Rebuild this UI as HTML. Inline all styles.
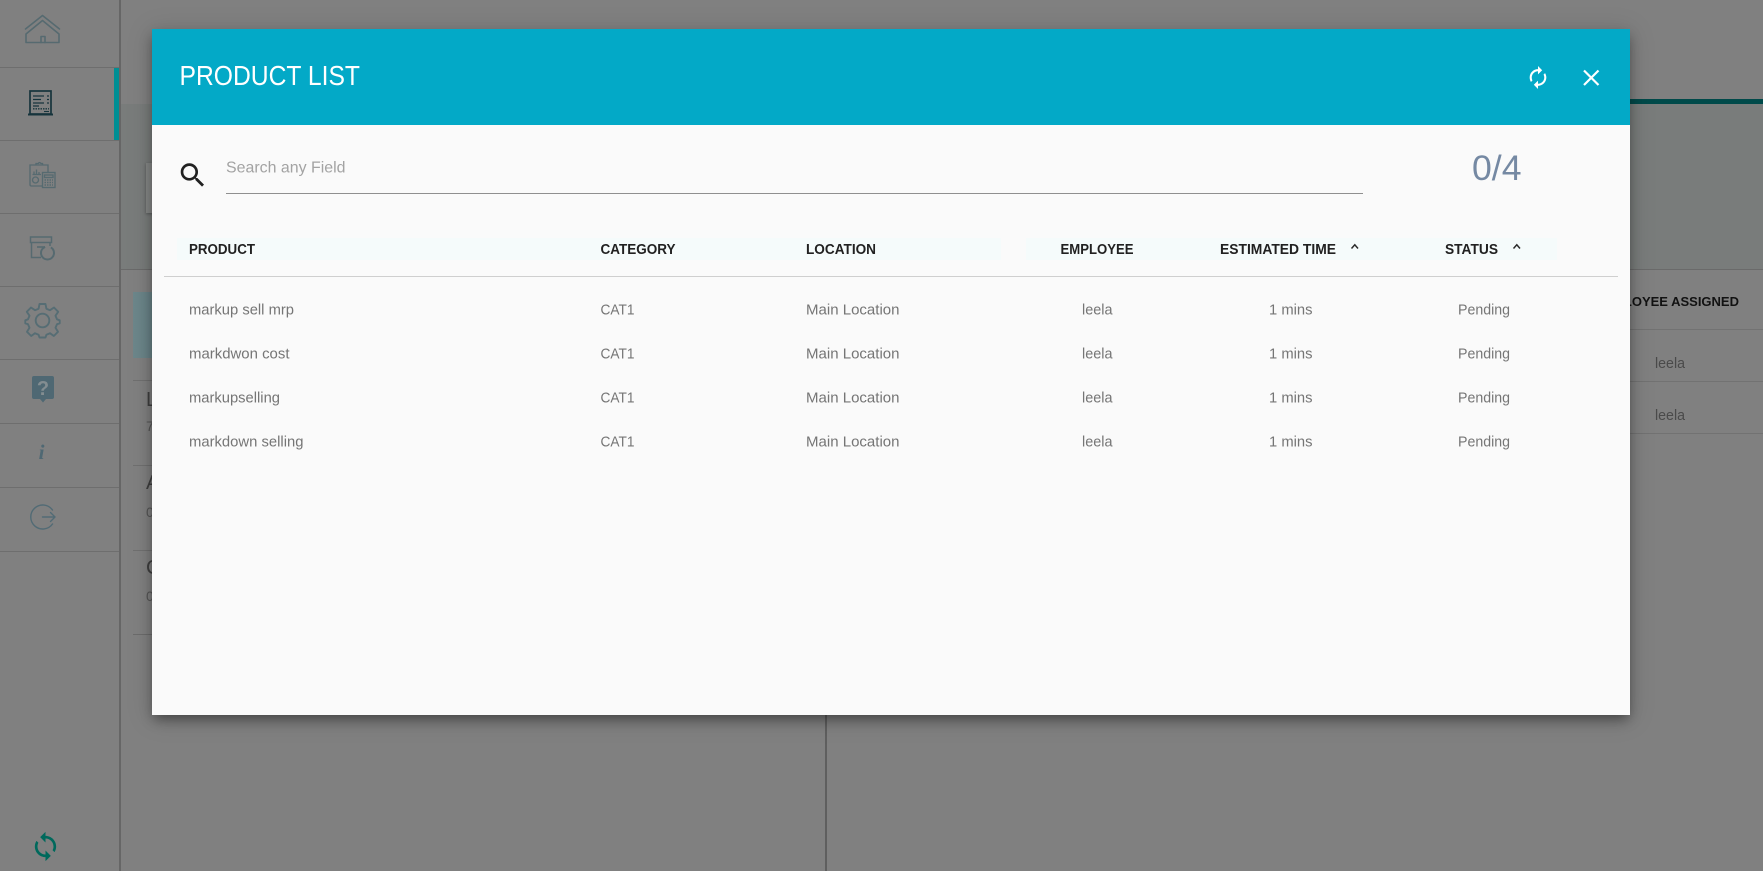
<!DOCTYPE html>
<html lang="en">
<head>
<meta charset="utf-8">
<title>Product List</title>
<style>
html,body{margin:0;padding:0;width:1763px;height:871px;overflow:hidden;background:#808080;font-family:"Liberation Sans",Arial,sans-serif}
.a{position:absolute}
#modal{left:152px;top:29px;width:1478px;height:686px;background:#fafafa;box-shadow:0 6px 12px -2px rgba(0,0,0,.42),0 3px 24px 2px rgba(0,0,0,.13)}
svg{position:absolute;left:0;top:0}
</style>
</head>
<body>
<!-- background regions -->
<div class="a" style="left:121px;top:104px;width:1642px;height:165px;background:#797c7b"></div>
<div class="a" style="left:1500px;top:99px;width:263px;height:5px;background:#004a4a"></div>
<div class="a" style="left:146px;top:163px;width:30px;height:50px;background:#858786;box-shadow:0 1px 3px rgba(0,0,0,.3)"></div>
<div class="a" style="left:121px;top:269px;width:1642px;height:1px;background:#6a6a6a"></div>
<div class="a" style="left:119px;top:0;width:2px;height:871px;background:#666"></div>
<div class="a" style="left:825px;top:270px;width:2px;height:601px;background:#5f5f5f"></div>
<div class="a" style="left:133px;top:292px;width:60px;height:66px;background:linear-gradient(90deg,#6d878b,#607a7f)"></div>
<div class="a" style="left:133px;top:380px;width:692px;height:1px;background:#707070"></div>
<div class="a" style="left:133px;top:465px;width:692px;height:1px;background:#707070"></div>
<div class="a" style="left:133px;top:550px;width:692px;height:1px;background:#707070"></div>
<div class="a" style="left:133px;top:634px;width:692px;height:1px;background:#6c6c6c"></div>
<div class="a" style="left:1500px;top:329px;width:263px;height:1px;background:#727272"></div>
<div class="a" style="left:1500px;top:381px;width:263px;height:1px;background:#727272"></div>
<div class="a" style="left:1500px;top:433px;width:263px;height:1px;background:#727272"></div>
<!-- sidebar dividers -->
<div class="a" style="left:0;top:67px;width:119px;height:1px;background:#6e6e6e"></div>
<div class="a" style="left:0;top:140px;width:119px;height:1px;background:#6e6e6e"></div>
<div class="a" style="left:0;top:213px;width:119px;height:1px;background:#6e6e6e"></div>
<div class="a" style="left:0;top:286px;width:119px;height:1px;background:#6e6e6e"></div>
<div class="a" style="left:0;top:359px;width:119px;height:1px;background:#6e6e6e"></div>
<div class="a" style="left:0;top:423px;width:119px;height:1px;background:#6e6e6e"></div>
<div class="a" style="left:0;top:487px;width:119px;height:1px;background:#6e6e6e"></div>
<div class="a" style="left:0;top:551px;width:119px;height:1px;background:#6e6e6e"></div>
<div class="a" style="left:114px;top:68px;width:5px;height:72px;background:#008f94"></div>

<!-- background text and sidebar icons -->
<svg width="1763" height="871" viewBox="0 0 1763 871" font-family="'Liberation Sans',Arial,sans-serif">
  <text x="146" y="406" font-size="20" fill="#3f3f3f">L</text>
  <text x="146" y="431" font-size="14" fill="#555">7</text>
  <text x="146" y="489" font-size="20" fill="#3f3f3f">A</text>
  <text x="146" y="517" font-size="14" fill="#555">0</text>
  <text x="146" y="574" font-size="20" fill="#3f3f3f">C</text>
  <text x="146" y="601" font-size="14" fill="#555">0</text>
  <text x="1739" y="306" font-size="13" font-weight="700" fill="#121212" text-anchor="end">EMPLOYEE ASSIGNED</text>
  <text x="1655" y="368" font-size="14.5" fill="#4a4a4a" textLength="30" lengthAdjust="spacingAndGlyphs">leela</text>
  <text x="1655" y="420" font-size="14.5" fill="#4a4a4a" textLength="30" lengthAdjust="spacingAndGlyphs">leela</text>

  <!-- home -->
  <g fill="none" stroke="#566a70" stroke-width="1.6" stroke-linejoin="round" stroke-linecap="round">
    <path d="M25.5 29 42.5 15.5 59.5 29"/>
    <path d="M26 42.5V34L42.5 20.5 59 34V42.5Z"/>
    <path d="M41 42.5V36.5H45V42.5"/>
  </g>
  <!-- receipt (active) -->
  <g fill="none" stroke="#16343c">
    <rect x="30" y="91" width="21" height="23" stroke-width="1.7"/>
    <path d="M28 114.5H53" stroke-width="2"/>
    <path d="M33 96H44M47 96H49M33 99.5H41M47 99.5H49M33 103H44M47 103H49M33 106H39" stroke-width="1.3"/>
    <path d="M33 108.8H49" stroke-width="1.3" stroke-dasharray="1.5 1"/>
    <path d="M44 111.5H49" stroke-width="1.1"/>
  </g>
  <!-- report -->
  <g fill="none" stroke="#566a70" stroke-width="1.35">
    <path d="M42 186H31.5Q30 186 30 184.5V165H48V172"/>
    <path d="M36 165V163.5H38.5Q39 161.5 41 163.5H42.5V165"/>
    <rect x="42.5" y="172.5" width="12.5" height="15"/>
    <rect x="44.5" y="175" width="8.5" height="2.5"/>
    <path d="M44.5 180H53M44.5 182.5H53M44.5 185H53" stroke-dasharray="1.5 1" stroke-width="1.4"/>
    <circle cx="35.5" cy="180" r="3"/>
    <path d="M34 174V171.5M36.5 174V169.5M39 174V172M32.5 174.5H41"/>
  </g>
  <!-- box -->
  <g fill="none" stroke="#566a70" stroke-width="1.5">
    <rect x="30.5" y="237" width="21" height="5.5"/>
    <path d="M31.5 242.5V257.5H41M50 242.5V246"/>
    <path d="M37 247H45" stroke-width="1.6"/>
    <circle cx="47.5" cy="253" r="6.5" stroke-width="2" stroke-dasharray="28 6"/>
  </g>
  <!-- gear -->
  <g fill="none" stroke="#566d74" stroke-width="1.9" stroke-linejoin="round">
    <circle cx="42.5" cy="320.5" r="6.8"/>
    <path d="M39.5 304H45.5L46.4 308.7 50 310.2 54 307.5 58.2 311.8 55.5 315.7 57 319.3 59.7 320.3V323.3L57 324.2 55.5 327.8 58 331.8 53.8 336 50 333.2 46.4 334.8 45.5 337.5H39.5L38.6 334.8 35 333.2 31.2 336 27 331.8 29.5 327.8 28 324.2 25.3 323.3V320.3L28 319.3 29.5 315.7 26.8 311.8 31 307.5 35 310.2 38.6 308.7Z"/>
  </g>
  <!-- help -->
  <path d="M34 376H52Q54 376 54 378V397Q54 399 52 399H46L43 402.5 40 399H34Q32 399 32 397V378Q32 376 34 376Z" fill="#4f6873"/>
  <text x="43" y="395" font-size="20" font-weight="700" fill="#838d91" text-anchor="middle">?</text>
  <!-- info -->
  <text x="41.5" y="459" font-size="21" font-weight="700" font-style="italic" font-family="'Liberation Serif',serif" fill="#4f6873" text-anchor="middle">i</text>
  <!-- logout -->
  <g fill="none" stroke="#526b75" stroke-width="1.4" stroke-linecap="round" stroke-linejoin="round">
    <path d="M52.5 510A12 12 0 1 0 52.5 524"/>
    <path d="M42.5 517H55M50.5 512.5 55 517 50.5 521.5"/>
  </g>
  <!-- sync -->
  <g transform="translate(29.5 830.5) scale(1.333)" fill="#00695c">
    <path d="M12 4V1L8 5l4 4V6c3.31 0 6 2.69 6 6 0 1.01-.25 1.97-.7 2.8l1.46 1.46C19.54 15.03 20 13.57 20 12c0-4.42-3.58-8-8-8zm0 14c-3.31 0-6-2.69-6-6 0-1.01.25-1.97.7-2.8L5.24 7.74C4.46 8.97 4 10.43 4 12c0 4.42 3.58 8 8 8v3l4-4-4-4v3z"/>
  </g>
</svg>

<!-- modal -->
<div class="a" id="modal">
  <div class="a" style="left:0;top:0;width:1478px;height:96px;background:#03a9c7"></div>
  <div class="a" style="left:25px;top:209px;width:824px;height:22px;background:#f5fbfb"></div>
  <div class="a" style="left:874px;top:209px;width:531px;height:22px;background:#f5fbfb"></div>
  <div class="a" style="left:74px;top:164px;width:1137px;height:1px;background:#8f8f8f"></div>
  <div class="a" style="left:12px;top:247px;width:1454px;height:1px;background:#cfcfcf"></div>
</div>

<!-- modal content -->
<svg width="1763" height="871" viewBox="0 0 1763 871" font-family="'Liberation Sans',Arial,sans-serif">
  <text x="179.5" y="85" font-size="28" fill="#fff" textLength="180.5" lengthAdjust="spacingAndGlyphs">PRODUCT LIST</text>
  <g transform="translate(1525.5 65) scale(1.042)" fill="#fff">
    <path d="M12 6v3l4-4-4-4v3c-4.42 0-8 3.58-8 8 0 1.57.46 3.03 1.24 4.26L6.7 14.8c-.45-.83-.7-1.79-.7-2.8 0-3.31 2.69-6 6-6zm6.76 1.74L17.3 9.2c.44.84.7 1.79.7 2.8 0 3.31-2.69 6-6 6v-3l-4 4 4 4v-3c4.42 0 8-3.58 8-8 0-1.57-.46-3.03-1.24-4.26z"/>
  </g>
  <path d="M1584 70.5 1598.5 85M1598.5 70.5 1584 85" stroke="#fff" stroke-width="2.2" fill="none"/>

  <g transform="translate(176.7 159.3) scale(1.333)" fill="#212121">
    <path d="M15.5 14h-.79l-.28-.27C15.41 12.59 16 11.11 16 9.5 16 5.91 13.09 3 9.5 3S3 5.91 3 9.5 5.91 16 9.5 16c1.61 0 3.09-.59 4.23-1.57l.27.28v.79l5 4.99L20.49 19l-4.99-5zm-6 0C7.01 14 5 11.99 5 9.5S7.01 5 9.5 5 14 7.01 14 9.5 11.99 14 9.5 14z"/>
  </g>
  <text x="226" y="172.5" font-size="16" fill="#a3a3a3" textLength="119.5" lengthAdjust="spacingAndGlyphs">Search any Field</text>
  <text x="1472" y="180" font-size="35" fill="#7589a3" textLength="49.5" lengthAdjust="spacingAndGlyphs">0/4</text>

  <g font-size="14.5" font-weight="700" fill="#212121">
    <text x="189" y="254" textLength="66" lengthAdjust="spacingAndGlyphs">PRODUCT</text>
    <text x="600.5" y="254" textLength="75" lengthAdjust="spacingAndGlyphs">CATEGORY</text>
    <text x="806" y="254" textLength="70" lengthAdjust="spacingAndGlyphs">LOCATION</text>
    <text x="1060.5" y="254" textLength="73" lengthAdjust="spacingAndGlyphs">EMPLOYEE</text>
    <text x="1220" y="254" textLength="116" lengthAdjust="spacingAndGlyphs">ESTIMATED TIME</text>
    <text x="1445" y="254" textLength="53" lengthAdjust="spacingAndGlyphs">STATUS</text>
  </g>
  <path d="M1351.5 248.5 1354.8 244.8 1358 248.5M1513.5 248.5 1516.8 244.8 1520 248.5" fill="none" stroke="#2b2b2b" stroke-width="1.5"/>

  <g font-size="14.3" fill="#757575">
    <text x="189" y="314.7" textLength="105" lengthAdjust="spacingAndGlyphs">markup sell mrp</text>
    <text x="600.5" y="314.7" textLength="34" lengthAdjust="spacingAndGlyphs">CAT1</text>
    <text x="806" y="314.7" textLength="93.5" lengthAdjust="spacingAndGlyphs">Main Location</text>
    <text x="1082" y="314.7" textLength="30.5" lengthAdjust="spacingAndGlyphs">leela</text>
    <text x="1269" y="314.7" textLength="43.5" lengthAdjust="spacingAndGlyphs">1 mins</text>
    <text x="1458" y="314.7" textLength="52" lengthAdjust="spacingAndGlyphs">Pending</text>

    <text x="189" y="358.7" textLength="100.5" lengthAdjust="spacingAndGlyphs">markdwon cost</text>
    <text x="600.5" y="358.7" textLength="34" lengthAdjust="spacingAndGlyphs">CAT1</text>
    <text x="806" y="358.7" textLength="93.5" lengthAdjust="spacingAndGlyphs">Main Location</text>
    <text x="1082" y="358.7" textLength="30.5" lengthAdjust="spacingAndGlyphs">leela</text>
    <text x="1269" y="358.7" textLength="43.5" lengthAdjust="spacingAndGlyphs">1 mins</text>
    <text x="1458" y="358.7" textLength="52" lengthAdjust="spacingAndGlyphs">Pending</text>

    <text x="189" y="402.7" textLength="91" lengthAdjust="spacingAndGlyphs">markupselling</text>
    <text x="600.5" y="402.7" textLength="34" lengthAdjust="spacingAndGlyphs">CAT1</text>
    <text x="806" y="402.7" textLength="93.5" lengthAdjust="spacingAndGlyphs">Main Location</text>
    <text x="1082" y="402.7" textLength="30.5" lengthAdjust="spacingAndGlyphs">leela</text>
    <text x="1269" y="402.7" textLength="43.5" lengthAdjust="spacingAndGlyphs">1 mins</text>
    <text x="1458" y="402.7" textLength="52" lengthAdjust="spacingAndGlyphs">Pending</text>

    <text x="189" y="446.7" textLength="114.5" lengthAdjust="spacingAndGlyphs">markdown selling</text>
    <text x="600.5" y="446.7" textLength="34" lengthAdjust="spacingAndGlyphs">CAT1</text>
    <text x="806" y="446.7" textLength="93.5" lengthAdjust="spacingAndGlyphs">Main Location</text>
    <text x="1082" y="446.7" textLength="30.5" lengthAdjust="spacingAndGlyphs">leela</text>
    <text x="1269" y="446.7" textLength="43.5" lengthAdjust="spacingAndGlyphs">1 mins</text>
    <text x="1458" y="446.7" textLength="52" lengthAdjust="spacingAndGlyphs">Pending</text>
  </g>
</svg>
</body>
</html>
